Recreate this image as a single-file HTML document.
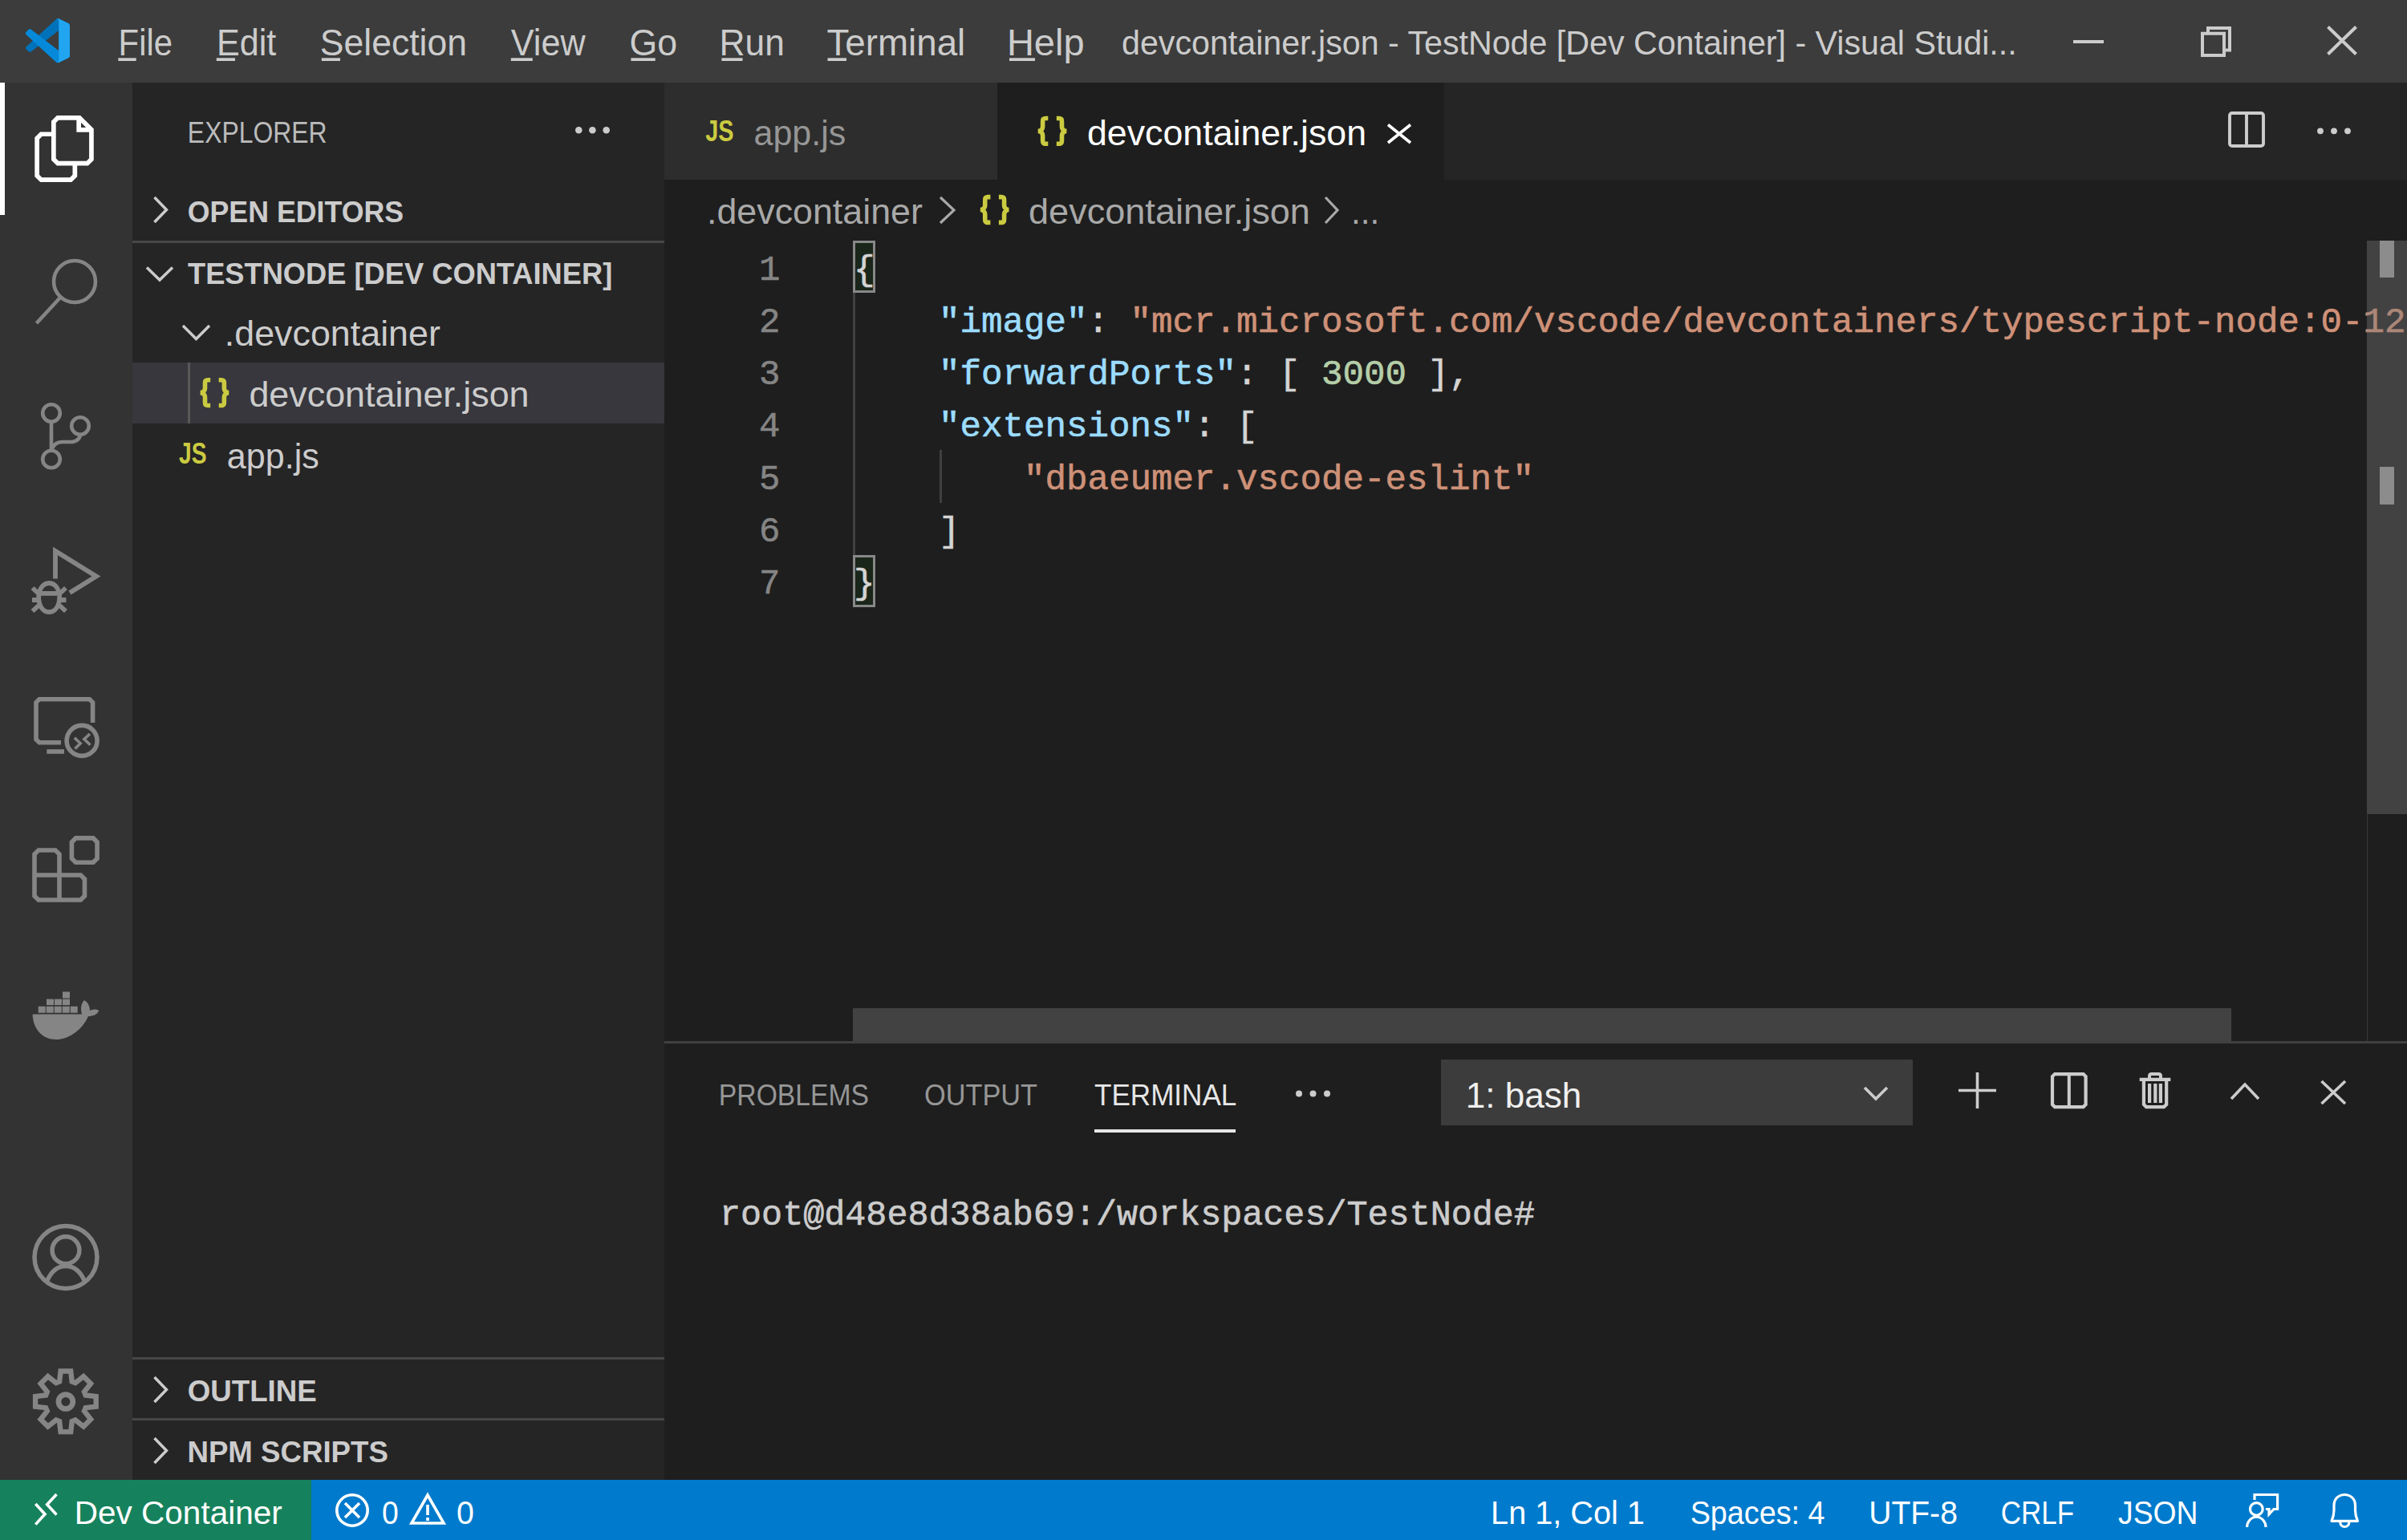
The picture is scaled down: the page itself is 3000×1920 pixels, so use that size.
<!DOCTYPE html>
<html><head><meta charset="utf-8"><title>devcontainer.json - TestNode [Dev Container] - Visual Studio Code</title>
<style>
html,body{margin:0;padding:0;width:3000px;height:1920px;overflow:hidden;background:#1e1e1e;font-family:"Liberation Sans", sans-serif;}
.r{position:absolute;}
#titlebar{left:0;top:0;width:3000px;height:103px;background:#3c3c3c;}
#activitybar{left:0;top:103px;width:165px;height:1742px;background:#333333;}
#sidebar{left:165px;top:103px;width:663px;height:1742px;background:#252526;}
#tabs{left:828px;top:103px;width:2172px;height:121px;background:#252526;}
#tab1{left:828px;top:103px;width:415px;height:121px;background:#2d2d2d;}
#tab2{left:1243px;top:103px;width:557px;height:121px;background:#1e1e1e;}
#editor{left:828px;top:224px;width:2172px;height:1074px;background:#1e1e1e;}
#panel{left:828px;top:1298px;width:2172px;height:547px;background:#1e1e1e;}
#statusbar{left:0;top:1845px;width:3000px;height:75px;background:#007acc;}
#remote{left:0;top:1845px;width:388px;height:75px;background:#16825d;}
svg{position:absolute;left:0;top:0;}
svg text{font-family:"Liberation Sans", sans-serif;white-space:pre;}
svg text.m{font-family:"Liberation Mono", monospace;stroke:currentColor;}
</style></head>
<body>
<div class="r" id="titlebar"></div>
<div class="r" id="activitybar"></div>
<div class="r" id="sidebar"></div>
<div class="r" id="tabs"></div>
<div class="r" id="tab1"></div>
<div class="r" id="tab2"></div>
<div class="r" id="editor"></div>
<div class="r" id="panel"></div>
<div class="r" id="statusbar"></div>
<div class="r" id="remote"></div>
<svg width="3000" height="1920" viewBox="0 0 3000 1920">
<!-- static shapes -->
<rect x="0" y="103" width="6" height="165" fill="#ffffff"/>
<rect x="165" y="300" width="663" height="3" fill="#474748"/>
<rect x="165" y="1692" width="663" height="3" fill="#474748"/>
<rect x="165" y="1768" width="663" height="3" fill="#474748"/>
<rect x="165" y="452" width="663" height="76" fill="#37373d"/>
<rect x="234" y="452" width="3" height="76" fill="#585858"/>
<!-- editor guides & bracket boxes -->
<rect x="1063" y="365" width="3" height="327" fill="#404040"/>
<rect x="1171" y="561" width="3" height="66" fill="#404040"/>
<rect x="1064.5" y="301.5" width="25" height="62" fill="#1b261b" stroke="#888888" stroke-width="3"/>
<rect x="1064.5" y="693.5" width="25" height="62" fill="#1b261b" stroke="#888888" stroke-width="3"/>
<!-- panel -->
<rect x="828" y="1298" width="2172" height="3" fill="#404040"/>
<rect x="1364" y="1408" width="176" height="4" fill="#e7e7e7"/>
<rect x="1796" y="1321" width="588" height="82" fill="#3c3c3c"/>

<!-- VS Code logo -->
<g transform="translate(32,23) scale(0.55,0.553)">
<path fill="#0072ba" d="M96.46 10.8L75.86.87a6.23 6.23 0 0 0-7.1 1.21L29.33 38.04 12.15 25a4.16 4.16 0 0 0-5.32.24L1.33 30.25a4.16 4.16 0 0 0 0 6.16L16.23 50 1.33 63.6a4.16 4.16 0 0 0 0 6.16l5.5 5a4.16 4.16 0 0 0 5.32.24l17.18-13.04 39.43 35.96a6.22 6.22 0 0 0 7.1 1.21l20.6-9.92A6.24 6.24 0 0 0 100 83.6V16.4a6.24 6.24 0 0 0-3.54-5.6zM75 72.7L45.1 50 75 27.3z"/>
<path fill="#007acc" d="M12.15 75l17.18-13.04 39.43 35.96a6.22 6.22 0 0 0 7.1 1.21l20.6-9.92A6.24 6.24 0 0 0 100 83.6V68L75 72.7 12.15 25a4.16 4.16 0 0 0-5.32.24L1.33 30.25a4.16 4.16 0 0 0 0 6.16L16.23 50 1.33 63.6a4.16 4.16 0 0 0 0 6.16l5.5 5a4.16 4.16 0 0 0 5.32.24z" opacity="0"/>
<path fill="#0689d8" d="M1.33 30.25a4.16 4.16 0 0 0 0 6.16L68.76 97.92a6.22 6.22 0 0 0 7.1 1.21l20.6-9.92A6.24 6.24 0 0 0 100 83.6V72L75 72.7 12.15 25a4.16 4.16 0 0 0-5.32.24z"/>
<path fill="#21a5f1" d="M75.86 99.13a6.22 6.22 0 0 1-7.1-1.21 3.65 3.65 0 0 0 6.24-2.58V4.66A3.65 3.65 0 0 0 68.76 2.08a6.23 6.23 0 0 1 7.1-1.21l20.6 9.93A6.24 6.24 0 0 1 100 16.43v67.14a6.24 6.24 0 0 1-3.54 5.63z"/>
</g>

<!-- activity bar icons -->
<g fill="none" stroke="#ffffff" stroke-width="5.7" stroke-linejoin="miter">
  <path d="M66.85 152 L72 146.85 H99 L113.95 161.8 V198.5 L108.8 203.65 H72 L66.85 198.5 Z"/>
  <path d="M98.2 146.85 V161.8 H113.95"/>
  <path d="M66.85 167.25 H51.3 L46.15 172.4 V219 L51.3 224.15 H88.2 L93.35 219 V203.65"/>
</g>
<g fill="none" stroke="#858585" stroke-width="4.6">
  <circle cx="93" cy="351" r="26"/>
  <path d="M75 371 L45.5 403"/>
</g>
<g fill="none" stroke="#858585" stroke-width="4.6">
  <circle cx="64" cy="515" r="10.8"/>
  <circle cx="64" cy="572.5" r="10.8"/>
  <circle cx="100" cy="531" r="10.8"/>
  <path d="M64 525.8 V561.7"/>
  <path d="M100 541.8 C100 547, 95 551, 88 551 H78 C71 551, 66 555, 64 561.7"/>
</g>
<g fill="none" stroke="#858585" stroke-width="4.6">
  <path d="M69 721.5 V687 L120 718.5 L87 739" stroke-width="5.8"/>
  <path d="M48.2 745 C48.2 734, 54 727, 61.2 727 C68.4 727, 74.2 734, 74.2 745 C74.2 756, 68.4 763, 61.2 763 C54 763, 48.2 756, 48.2 745 Z" stroke-width="5.8"/>
  <path d="M51 739.8 H71 M40 748 H48 M74.5 748 H82.5 M40.5 733 L48 740 M82 733 L74.5 740 M40.5 762 L48 755 M82 762 L74.5 755" stroke-width="5.8"/>
</g>
<g fill="none" stroke="#858585" stroke-width="5.6">
  <path d="M76 925.8 H49 L45 921.8 V875.8 L49 871.8 H111.6 L115.6 875.8 V901"/>
  <path d="M58.3 937 H80"/>
  <circle cx="102.1" cy="923.4" r="19"/>
  <path d="M92.8 919.9 L100.2 926.7 L93.4 933.6 M111.9 915 L104.9 921.6 L112.5 928.7" stroke-width="3.6"/>
</g>
<g fill="none" stroke="#858585" stroke-width="5.6">
  <path d="M43 1065 L48 1060 H69 L74 1065 V1091 H100.5 L105.5 1096 V1117 L100.5 1122 H48 L43 1117 Z"/>
  <path d="M43 1091 H74 V1122"/>
  <path d="M89.4 1049.9 L94.4 1044.9 H116.1 L121.1 1049.9 V1070.3 L116.1 1075.3 H94.4 L89.4 1070.3 Z"/>
</g>
<g fill="#858585">
  <rect x="78" y="1236.5" width="9" height="8"/>
  <rect x="58" y="1245.6" width="9" height="7.5"/>
  <rect x="68" y="1245.6" width="9" height="7.5"/>
  <rect x="78" y="1245.6" width="9" height="7.5"/>
  <rect x="47.7" y="1254.7" width="9" height="8"/>
  <rect x="57.7" y="1254.7" width="9" height="8"/>
  <rect x="67.7" y="1254.7" width="9" height="8"/>
  <rect x="77.7" y="1254.7" width="9" height="8"/>
  <rect x="87.7" y="1254.7" width="9" height="8"/>
  <path d="M40.6 1264.4 H102 C100 1258, 101 1251, 105 1247 C110 1250, 112 1255, 112 1260 C116 1258, 121 1258, 123.3 1260 C121 1265, 116 1267, 110 1267 C102 1285, 85 1296, 70 1296 C52 1296, 41 1282, 40.6 1264.4 Z"/>
</g>
<g fill="none" stroke="#858585" stroke-width="5.5">
  <circle cx="82" cy="1567.4" r="39"/>
  <circle cx="82" cy="1558.7" r="16.9"/>
  <path d="M58.7 1596.9 C64 1585, 72 1578.5, 82 1578.5 C92 1578.5, 100 1585, 105.3 1596.9"/>
</g>
<g fill="none" stroke="#858585" stroke-width="6.4" stroke-linejoin="miter">
  <path d="M74.1 1722.5 L75.6 1709.5 L88.2 1709.5 L89.7 1722.5 L93.9 1724.2 L104.1 1716.1 L113.1 1725.1 L105.0 1735.3 L106.7 1739.5 L119.7 1741.0 L119.7 1753.6 L106.7 1755.1 L105.0 1759.3 L113.1 1769.5 L104.1 1778.5 L93.9 1770.4 L89.7 1772.1 L88.2 1785.1 L75.6 1785.1 L74.1 1772.1 L69.9 1770.4 L59.7 1778.5 L50.7 1769.5 L58.8 1759.3 L57.1 1755.1 L44.1 1753.6 L44.1 1741.0 L57.1 1739.5 L58.8 1735.3 L50.7 1725.1 L59.7 1716.1 L69.9 1724.2 Z"/>
  <circle cx="81.9" cy="1747.5" r="8.9" stroke-width="6.8"/>
</g>

<!-- title bar controls -->
<g fill="none" stroke="#cccccc" stroke-width="4">
  <path d="M2584 52 H2622"/>
  <path d="M2745 41.8 H2772 V69 H2745 Z"/>
  <path d="M2752 41 V35 H2779 V62.5 H2773"/>
  <path d="M2901.5 33.5 L2936.5 67.5 M2936.5 33.5 L2901.5 67.5"/>
</g>
<!-- explorer dots -->
<g fill="#cccccc">
  <circle cx="721.3" cy="162.3" r="4.3"/><circle cx="738.4" cy="162.3" r="4.3"/><circle cx="755.7" cy="162.3" r="4.3"/>
</g>
<!-- sidebar chevrons -->
<g fill="none" stroke="#cccccc" stroke-width="3.5">
  <path d="M192.5 246 L207.5 261.5 L192.5 277"/>
  <path d="M183 333.5 L199 349 L215 333.5"/>
  <path d="M228 406 L244.5 422.5 L261 406"/>
  <path d="M192.5 1717 L207.5 1732.5 L192.5 1748"/>
  <path d="M192.5 1793 L207.5 1808.5 L192.5 1824"/>
</g>
<!-- tab close -->
<g fill="none" stroke="#ffffff" stroke-width="3.6">
  <path d="M1730 155.5 L1758 178 M1758 155.5 L1730 178"/>
</g>
<!-- breadcrumb chevrons -->
<g fill="none" stroke="#a9a9a9" stroke-width="3.2">
  <path d="M1172 246 L1189 262 L1172 278"/>
  <path d="M1652 246 L1667 262 L1652 278"/>
</g>
<!-- split editor & more -->
<g fill="none" stroke="#cccccc" stroke-width="3.9">
  <rect x="2779" y="141" width="42" height="41" rx="3"/>
  <path d="M2800 141 V182"/>
</g>
<g fill="#cccccc">
  <circle cx="2892" cy="163.3" r="3.9"/><circle cx="2909" cy="163.3" r="3.9"/><circle cx="2926" cy="163.3" r="3.9"/>
</g>
<!-- panel icons -->
<g fill="#cccccc">
  <circle cx="1619" cy="1363.4" r="4"/><circle cx="1636.5" cy="1363.4" r="4"/><circle cx="1654" cy="1363.4" r="4"/>
</g>
<g fill="none" stroke="#cccccc" stroke-width="3.6">
  <path d="M2324 1356 L2338 1370 L2352 1356"/>
  <path d="M2441 1359.5 H2488 M2464.5 1337 V1382"/>
  <path d="M2561 1339.1 H2596.6 L2599.6 1342.1 V1377.1 L2596.6 1380.1 H2561 L2558 1377.1 V1342.1 Z" stroke-width="4.2"/>
  <path d="M2578.8 1339.1 V1380.1" stroke-width="4"/>
  <path d="M2666.7 1345.8 H2705.3" stroke-width="4.2"/>
  <path d="M2679 1344 V1341.5 Q2679 1339, 2681.5 1339 H2690.5 Q2693 1339, 2693 1341.5 V1344" stroke-width="4"/>
  <path d="M2671.9 1347 V1377 L2675 1380.1 H2697 L2700.2 1377 V1347" stroke-width="4.2"/>
  <rect x="2677" y="1351" width="4.2" height="24" fill="#cccccc" stroke="none"/>
  <rect x="2684.2" y="1351" width="4.2" height="24" fill="#cccccc" stroke="none"/>
  <rect x="2690.8" y="1351" width="4.2" height="24" fill="#cccccc" stroke="none"/>
  <path d="M2781 1370 L2798 1352 L2815 1370"/>
  <path d="M2893.5 1348 L2923 1376 M2923 1348 L2893.5 1376"/>
</g>
<!-- status bar icons -->
<g fill="none" stroke="#ffffff" stroke-width="3.6">
  <path d="M44.3 1875 L56 1887.8 L44.3 1900.6 M70.5 1863 L58.7 1875.7 L70.5 1888.4"/>
  <circle cx="439" cy="1883" r="19.2"/>
  <path d="M430 1874 L448 1892 M448 1874 L430 1892"/>
  <path d="M533 1864 L553 1899 H513 Z" stroke-linejoin="miter"/>
  <path d="M533 1876 V1889 M533 1892 V1896"/>
  <path d="M2810 1870 V1863.5 H2838.6 V1881.5 H2834 L2828 1888 V1881.5 H2824" stroke-width="3.2"/>
  <circle cx="2812.3" cy="1881.4" r="7.85" stroke-width="3.2"/>
  <path d="M2800.6 1904 A11.7 12.8 0 0 1 2824 1904" stroke-width="3.2"/>
  <path d="M2906 1896.3 H2938.5 C2937 1893, 2935.5 1889, 2935.5 1883 V1877 C2935.5 1868, 2929 1863.5, 2922.2 1863.5 C2915.4 1863.5, 2909 1868, 2909 1877 V1883 C2909 1889, 2907.5 1893, 2906 1896.3 Z" stroke-width="3.2" stroke-linejoin="round"/>
  <path d="M2916.8 1898 A5.5 5.5 0 0 0 2927.8 1898" stroke-width="3.2"/>
</g>

<!-- menu mnemonic underlines -->
<g fill="#cccccc">
<rect x="147.4" y="72.3" width="22.3" height="3.7"/>
<rect x="269.8" y="72.3" width="23.2" height="3.7"/>
<rect x="400.8" y="72.3" width="23.2" height="3.7"/>
<rect x="636.8" y="72.3" width="27" height="3.7"/>
<rect x="786.4" y="72.3" width="30.3" height="3.7"/>
<rect x="899.4" y="72.3" width="26.1" height="3.7"/>
<rect x="1031.5" y="72.3" width="23.5" height="3.7"/>
<rect x="1258" y="72.3" width="32" height="3.7"/>
</g>

<path d="M262.20 473.70 H259.52 C255.02 473.70 255.52 475.70 255.52 479.70 V483.60 C255.52 488.10 252.10 489.60 249.60 489.60 C252.10 489.60 255.52 491.10 255.52 495.60 V499.50 C255.52 503.50 255.02 505.50 259.52 505.50 H262.20" fill="none" stroke="#cbcb41" stroke-width="5.6"/><path d="M13.10 473.70 H10.42 C5.92 473.70 6.42 475.70 6.42 479.70 V483.60 C6.42 488.10 3.00 489.60 0.50 489.60 C3.00 489.60 6.42 491.10 6.42 495.60 V499.50 C6.42 503.50 5.92 505.50 10.42 505.50 H13.10" fill="none" stroke="#cbcb41" stroke-width="5.6" transform="translate(285.80,0) scale(-1,1)"/><path d="M1306.30 147.50 H1303.62 C1299.12 147.50 1299.62 149.50 1299.62 153.50 V157.40 C1299.62 161.90 1296.20 163.40 1293.70 163.40 C1296.20 163.40 1299.62 164.90 1299.62 169.40 V173.30 C1299.62 177.30 1299.12 179.30 1303.62 179.30 H1306.30" fill="none" stroke="#cbcb41" stroke-width="5.6"/><path d="M13.10 147.50 H10.42 C5.92 147.50 6.42 149.50 6.42 153.50 V157.40 C6.42 161.90 3.00 163.40 0.50 163.40 C3.00 163.40 6.42 164.90 6.42 169.40 V173.30 C6.42 177.30 5.92 179.30 10.42 179.30 H13.10" fill="none" stroke="#cbcb41" stroke-width="5.6" transform="translate(1329.90,0) scale(-1,1)"/><path d="M1234.40 245.60 H1231.72 C1227.22 245.60 1227.72 247.60 1227.72 251.60 V255.50 C1227.72 260.00 1224.30 261.50 1221.80 261.50 C1224.30 261.50 1227.72 263.00 1227.72 267.50 V271.40 C1227.72 275.40 1227.22 277.40 1231.72 277.40 H1234.40" fill="none" stroke="#cbcb41" stroke-width="5.6"/><path d="M13.10 245.60 H10.42 C5.92 245.60 6.42 247.60 6.42 251.60 V255.50 C6.42 260.00 3.00 261.50 0.50 261.50 C3.00 261.50 6.42 263.00 6.42 267.50 V271.40 C6.42 275.40 5.92 277.40 10.42 277.40 H13.10" fill="none" stroke="#cbcb41" stroke-width="5.6" transform="translate(1258.00,0) scale(-1,1)"/>
<text x="147.57" y="69.00" font-size="46" font-weight="normal" fill="#cccccc" textLength="67.47" lengthAdjust="spacingAndGlyphs">File</text>
<text x="269.88" y="69.00" font-size="46" font-weight="normal" fill="#cccccc" textLength="74.41" lengthAdjust="spacingAndGlyphs">Edit</text>
<text x="398.86" y="69.00" font-size="46" font-weight="normal" fill="#cccccc" textLength="183.14" lengthAdjust="spacingAndGlyphs">Selection</text>
<text x="636.80" y="69.00" font-size="46" font-weight="normal" fill="#cccccc" textLength="92.77" lengthAdjust="spacingAndGlyphs">View</text>
<text x="784.46" y="69.00" font-size="46" font-weight="normal" fill="#cccccc" textLength="59.58" lengthAdjust="spacingAndGlyphs">Go</text>
<text x="896.51" y="69.00" font-size="46" font-weight="normal" fill="#cccccc" textLength="81.38" lengthAdjust="spacingAndGlyphs">Run</text>
<text x="1030.51" y="69.00" font-size="46" font-weight="normal" fill="#cccccc" textLength="172.70" lengthAdjust="spacingAndGlyphs">Terminal</text>
<text x="1254.93" y="69.00" font-size="46" font-weight="normal" fill="#cccccc" textLength="96.68" lengthAdjust="spacingAndGlyphs">Help</text>
<text x="1398.02" y="68.00" font-size="42.2" font-weight="normal" fill="#cccccc" textLength="1115.61" lengthAdjust="spacingAndGlyphs">devcontainer.json - TestNode [Dev Container] - Visual Studi...</text>
<text x="233.87" y="178.00" font-size="37.8" font-weight="normal" fill="#bbbbbb" textLength="173.73" lengthAdjust="spacingAndGlyphs">EXPLORER</text>
<text x="233.65" y="276.50" font-size="37.8" font-weight="bold" fill="#cccccc" textLength="269.49" lengthAdjust="spacingAndGlyphs">OPEN EDITORS</text>
<text x="234.00" y="353.70" font-size="37.8" font-weight="bold" fill="#cccccc" textLength="529.22" lengthAdjust="spacingAndGlyphs">TESTNODE [DEV CONTAINER]</text>
<text x="279.79" y="431.00" font-size="44.7" font-weight="normal" fill="#cccccc" textLength="269.09" lengthAdjust="spacingAndGlyphs">.devcontainer</text>
<text x="310.40" y="507.30" font-size="44.7" font-weight="normal" fill="#cccccc" textLength="349.17" lengthAdjust="spacingAndGlyphs">devcontainer.json</text>
<text x="282.84" y="583.60" font-size="44.7" font-weight="normal" fill="#cccccc" textLength="114.96" lengthAdjust="spacingAndGlyphs">app.js</text>
<text x="233.63" y="1747.00" font-size="37.8" font-weight="bold" fill="#cccccc" textLength="161.25" lengthAdjust="spacingAndGlyphs">OUTLINE</text>
<text x="233.46" y="1823.00" font-size="37.8" font-weight="bold" fill="#cccccc" textLength="250.41" lengthAdjust="spacingAndGlyphs">NPM SCRIPTS</text>
<text x="223.00" y="577.80" font-size="37" font-weight="bold" fill="#cbcb41" textLength="34.52" lengthAdjust="spacingAndGlyphs">JS</text>
<text x="879.20" y="176.00" font-size="37" font-weight="bold" fill="#cbcb41" textLength="35.33" lengthAdjust="spacingAndGlyphs">JS</text>
<text x="939.54" y="180.70" font-size="44.7" font-weight="normal" fill="#969696" textLength="114.76" lengthAdjust="spacingAndGlyphs">app.js</text>
<text x="1355.00" y="181.00" font-size="44.7" font-weight="normal" fill="#ffffff" textLength="348.06" lengthAdjust="spacingAndGlyphs">devcontainer.json</text>
<text x="880.99" y="279.00" font-size="44.7" font-weight="normal" fill="#a9a9a9" textLength="268.89" lengthAdjust="spacingAndGlyphs">.devcontainer</text>
<text x="1281.99" y="279.00" font-size="44.7" font-weight="normal" fill="#a9a9a9" textLength="350.89" lengthAdjust="spacingAndGlyphs">devcontainer.json</text>
<text x="1683.91" y="279.00" font-size="44.7" font-weight="normal" fill="#a9a9a9" textLength="35.33" lengthAdjust="spacingAndGlyphs">...</text>
<text x="895.83" y="1378.00" font-size="37.8" font-weight="normal" fill="#969696" textLength="187.25" lengthAdjust="spacingAndGlyphs">PROBLEMS</text>
<text x="1152.09" y="1378.00" font-size="37.8" font-weight="normal" fill="#969696" textLength="140.99" lengthAdjust="spacingAndGlyphs">OUTPUT</text>
<text x="1364.00" y="1378.00" font-size="37.8" font-weight="normal" fill="#e7e7e7" textLength="177.35" lengthAdjust="spacingAndGlyphs">TERMINAL</text>
<text x="1826.74" y="1381.00" font-size="44.7" font-weight="normal" fill="#f0f0f0" textLength="144.57" lengthAdjust="spacingAndGlyphs">1: bash</text>
<text x="92.75" y="1899.80" font-size="41.25" font-weight="normal" fill="#ffffff" textLength="258.99" lengthAdjust="spacingAndGlyphs">Dev Container</text>
<text x="476.10" y="1899.80" font-size="41.25" font-weight="normal" fill="#ffffff" textLength="20.76" lengthAdjust="spacingAndGlyphs">0</text>
<text x="569.05" y="1899.80" font-size="41.25" font-weight="normal" fill="#ffffff" textLength="21.85" lengthAdjust="spacingAndGlyphs">0</text>
<text x="1858.12" y="1899.80" font-size="41.25" font-weight="normal" fill="#ffffff" textLength="191.75" lengthAdjust="spacingAndGlyphs">Ln 1, Col 1</text>
<text x="2106.69" y="1899.80" font-size="41.25" font-weight="normal" fill="#ffffff" textLength="167.78" lengthAdjust="spacingAndGlyphs">Spaces: 4</text>
<text x="2329.16" y="1899.80" font-size="41.25" font-weight="normal" fill="#ffffff" textLength="110.73" lengthAdjust="spacingAndGlyphs">UTF-8</text>
<text x="2493.70" y="1899.80" font-size="41.25" font-weight="normal" fill="#ffffff" textLength="91.31" lengthAdjust="spacingAndGlyphs">CRLF</text>
<text x="2640.00" y="1899.80" font-size="41.25" font-weight="normal" fill="#ffffff" textLength="99.52" lengthAdjust="spacingAndGlyphs">JSON</text>
<text class="m" x="1064.00" y="348.50" font-size="44.08" fill="#d4d4d4" style="color:#d4d4d4" stroke-width="0.6" textLength="26.50" lengthAdjust="spacingAndGlyphs">{</text>
<text class="m" x="972.5" y="348.50" text-anchor="end" font-size="44.08" fill="#858585" style="color:#858585" stroke-width="0.5">1</text>
<text class="m" x="1170.00" y="413.80" font-size="44.08" fill="#9cdcfe" style="color:#9cdcfe" stroke-width="0.6" textLength="185.50" lengthAdjust="spacingAndGlyphs">"image"</text>
<text class="m" x="1355.50" y="413.80" font-size="44.08" fill="#d4d4d4" style="color:#d4d4d4" stroke-width="0.6" textLength="53.00" lengthAdjust="spacingAndGlyphs">: </text>
<text class="m" x="1408.50" y="413.80" font-size="44.08" fill="#ce9178" style="color:#ce9178" stroke-width="0.6" textLength="1616.50" lengthAdjust="spacingAndGlyphs">"mcr.microsoft.com/vscode/devcontainers/typescript-node:0-12"</text>
<text class="m" x="972.5" y="413.80" text-anchor="end" font-size="44.08" fill="#858585" style="color:#858585" stroke-width="0.5">2</text>
<text class="m" x="1170.00" y="479.10" font-size="44.08" fill="#9cdcfe" style="color:#9cdcfe" stroke-width="0.6" textLength="371.00" lengthAdjust="spacingAndGlyphs">"forwardPorts"</text>
<text class="m" x="1541.00" y="479.10" font-size="44.08" fill="#d4d4d4" style="color:#d4d4d4" stroke-width="0.6" textLength="106.00" lengthAdjust="spacingAndGlyphs">: [ </text>
<text class="m" x="1647.00" y="479.10" font-size="44.08" fill="#b5cea8" style="color:#b5cea8" stroke-width="0.6" textLength="106.00" lengthAdjust="spacingAndGlyphs">3000</text>
<text class="m" x="1753.00" y="479.10" font-size="44.08" fill="#d4d4d4" style="color:#d4d4d4" stroke-width="0.6" textLength="79.50" lengthAdjust="spacingAndGlyphs"> ],</text>
<text class="m" x="972.5" y="479.10" text-anchor="end" font-size="44.08" fill="#858585" style="color:#858585" stroke-width="0.5">3</text>
<text class="m" x="1170.00" y="544.40" font-size="44.08" fill="#9cdcfe" style="color:#9cdcfe" stroke-width="0.6" textLength="318.00" lengthAdjust="spacingAndGlyphs">"extensions"</text>
<text class="m" x="1488.00" y="544.40" font-size="44.08" fill="#d4d4d4" style="color:#d4d4d4" stroke-width="0.6" textLength="79.50" lengthAdjust="spacingAndGlyphs">: [</text>
<text class="m" x="972.5" y="544.40" text-anchor="end" font-size="44.08" fill="#858585" style="color:#858585" stroke-width="0.5">4</text>
<text class="m" x="1276.00" y="609.70" font-size="44.08" fill="#ce9178" style="color:#ce9178" stroke-width="0.6" textLength="636.00" lengthAdjust="spacingAndGlyphs">"dbaeumer.vscode-eslint"</text>
<text class="m" x="972.5" y="609.70" text-anchor="end" font-size="44.08" fill="#858585" style="color:#858585" stroke-width="0.5">5</text>
<text class="m" x="1170.00" y="675.00" font-size="44.08" fill="#d4d4d4" style="color:#d4d4d4" stroke-width="0.6" textLength="26.50" lengthAdjust="spacingAndGlyphs">]</text>
<text class="m" x="972.5" y="675.00" text-anchor="end" font-size="44.08" fill="#858585" style="color:#858585" stroke-width="0.5">6</text>
<text class="m" x="1064.00" y="740.30" font-size="44.08" fill="#d4d4d4" style="color:#d4d4d4" stroke-width="0.6" textLength="26.50" lengthAdjust="spacingAndGlyphs">}</text>
<text class="m" x="972.5" y="740.30" text-anchor="end" font-size="44.08" fill="#858585" style="color:#858585" stroke-width="0.5">7</text>
<text class="m" x="897" y="1526.8" font-size="43.83" fill="#cccccc" style="color:#cccccc" stroke-width="0.6" textLength="1015.95" lengthAdjust="spacingAndGlyphs">root@d48e8d38ab69:/workspaces/TestNode#</text>
<!-- scrollbars -->
<rect x="1063" y="1257" width="1718" height="41" fill="rgb(121,121,121)" fill-opacity="0.4"/>
<rect x="2950" y="300" width="50" height="715" fill="rgb(121,121,121)" fill-opacity="0.4"/>
<rect x="2950" y="1015" width="1" height="283" fill="#383838"/>
<rect x="2966" y="300" width="18" height="46" fill="#8c8c8c"/>
<rect x="2966" y="582" width="18" height="47" fill="#8c8c8c"/>

</svg>
</body></html>
